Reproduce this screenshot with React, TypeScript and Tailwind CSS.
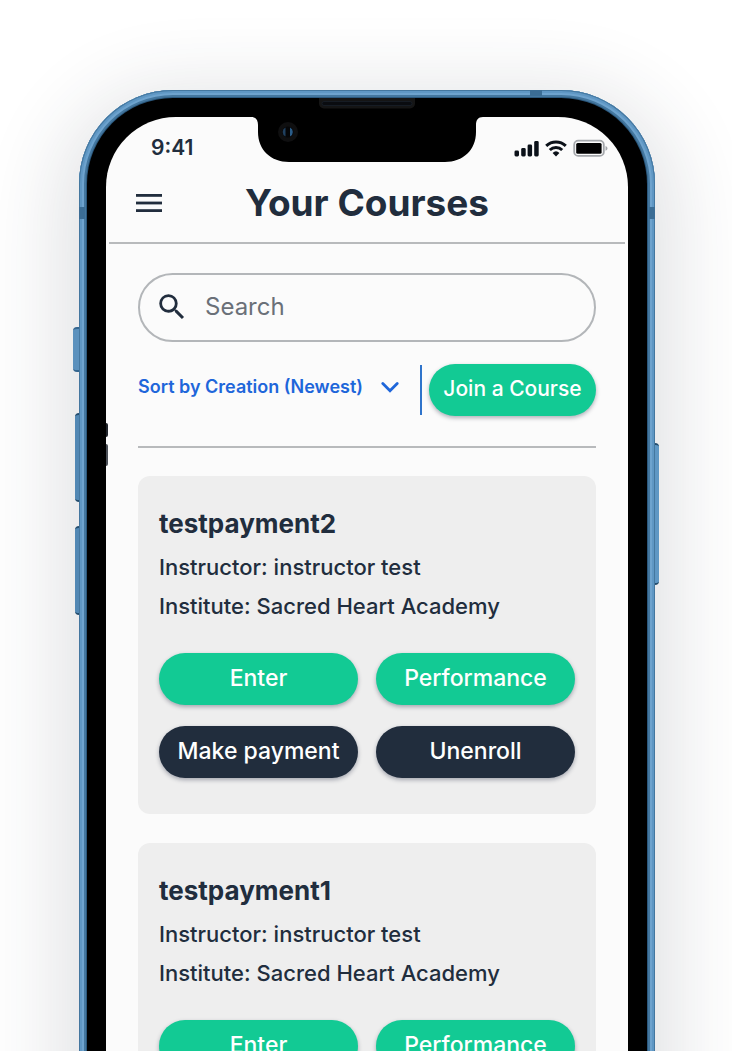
import { useState } from "react";
import { MdSearch } from "react-icons/md";

type Course = { name: string; instructor: string; institute: string };

const courses: Course[] = [
  { name: "testpayment2", instructor: "instructor test", institute: "Sacred Heart Academy" },
  { name: "testpayment1", instructor: "instructor test", institute: "Sacred Heart Academy" },
];

function Pill({ label, tone, compact = false }: { label: string; tone: "green" | "navy"; compact?: boolean }) {
  const color = tone === "green" ? "bg-[#12ca94]" : "bg-[#212d3d]";
  const size = compact ? "text-[21px]" : "text-[23px]";
  return (
    <button
      type="button"
      className={`h-13 w-full rounded-full pb-0.5 leading-7 font-medium whitespace-nowrap text-white shadow-[0_2px_4px_rgba(30,35,60,0.35)] ${size} ${color}`}
    >
      {label}
    </button>
  );
}

function CourseCard({ course }: { course: Course }) {
  return (
    <article className="rounded-xl bg-[#eeeeee] px-[21px] pt-7 pb-9">
      <h2 className="text-[26px] leading-10 font-bold">{course.name}</h2>
      <p className="mt-1 text-[22px] leading-[39px] font-medium">Instructor: {course.instructor}</p>
      <p className="text-[22px] leading-[39px] font-medium">Institute: {course.institute}</p>
      <div className="mt-[27px] grid grid-cols-2 gap-x-[18px] gap-y-[21px]">
        <Pill label="Enter" tone="green" />
        <Pill label="Performance" tone="green" />
        <Pill label="Make payment" tone="navy" />
        <Pill label="Unenroll" tone="navy" />
      </div>
    </article>
  );
}

function StatusIcons() {
  return (
    <svg width="94" height="20" viewBox="0 0 94 20" fill="#0b1119" aria-hidden="true">
      <rect x="0.5" y="12.500" width="4.5" height="6" rx="1.4" />
      <rect x="7.2" y="10" width="4.5" height="8.5" rx="1.4" />
      <rect x="13.6" y="6.500" width="4.5" height="12" rx="1.4" />
      <rect x="20.2" y="3" width="4.5" height="15.5" rx="1.4" />
      <g fill="none" stroke="#0b1119" strokeWidth="3">
        <path d="M32.2 7.900a14.4 14.4 0 0 1 19.6 0" />
        <path d="M35.8 12a9 9 0 0 1 12.4 0" />
      </g>
      <path d="M42 18.500l-3.4-3.6a5 5 0 0 1 6.8 0z" />
      <rect x="60.2" y="2.7" width="29.6" height="15.2" rx="4" fill="none" stroke="#a4a7ab" strokeWidth="1.8" />
      <rect x="62.2" y="4.900" width="25.400" height="10.8" rx="1.500" fill="#000" />
      <path d="M91.5 7.900c1.4.4 2 1.400 2 2.400s-.6 2-2 2.400z" fill="#a4a7ab" />
    </svg>
  );
}

function Notch() {
  return (
    <svg
      className="absolute top-0 left-1/2 -translate-x-1/2"
      width="232"
      height="65"
      viewBox="0 0 232 65"
      aria-hidden="true"
    >
      <path d="M0 19V0H232V19C227 19 225 22 225 27V34C225 52 212 64 194 64H38C20 64 7 52 7 34V27C7 22 5 19 0 19Z" fill="#000" />
      <path d="M68 0H164V5.500a5 5 0 0 1-5 5H73a5 5 0 0 1-5-5Z" fill="#151515" />
      <rect x="71" y="3.500" width="90" height="4" rx="2" fill="#0a0c10" stroke="#1b2530" strokeWidth="0.6" />
      <circle cx="37" cy="34" r="10" fill="#0f0f10" />
      <circle cx="37" cy="34" r="5.500" fill="#050608" />
      <path d="M34.5 29.5a5 5 0 0 0 0 9z" fill="#20405f" />
      <path d="M39 29.5a5 5 0 0 1 0 9z" fill="#2a5c88" />
    </svg>
  );
}

function SideKeys() {
  return (
    <div aria-hidden="true">
      <span className="absolute top-[237px] -left-1.5 h-[45px] w-1.5 rounded-l-sm border-y-2 border-[#35668f] bg-[#5b91bd]" />
      <span className="absolute top-[323px] -left-1 h-[89px] w-1 rounded-l-sm border-y-2 border-[#244d6e] bg-[#5288b4]" />
      <span className="absolute top-[436px] -left-1 h-[89px] w-1 rounded-l-sm border-y-2 border-[#244d6e] bg-[#5288b4]" />
      <span className="absolute top-[353px] -right-1 h-[142px] w-1 rounded-r-sm border-y-2 border-[#244d6e] bg-[#5f97c4]" />
      <span className="absolute top-[117px] left-0 h-3 w-1.5 bg-[#3b6d95]" />
      <span className="absolute top-[117px] right-0 h-3 w-1.5 bg-[#3b6d95]" />
      <span className="absolute top-0 right-[113px] h-1.5 w-3 bg-[#3b6d95]" />
    </div>
  );
}

export default function App() {
  const [sort, setSort] = useState("newest");

  return (
    <div className="h-screen overflow-hidden bg-white pt-[90px] pr-[77px] pl-[79px] font-['Inter','Liberation_Sans',sans-serif] text-[#212d3d]">
      <div className="relative rounded-t-[94px] bg-[#2b587d] px-2 pt-2 shadow-[inset_0_0_0_1px_#44779f,inset_0_0_0_3px_#5f97c4,inset_0_0_0_5px_#6ea3ce,inset_0_0_0_7px_#44779f,0_20px_80px_20px_rgba(40,48,66,0.14)]">
        <SideKeys />
        <div className="relative rounded-t-[86px] bg-black px-[19px] pt-[19px]">
          <div className="rounded-t-[70px] bg-[#fbfbfb]">
            <div className="flex h-[62px] items-center justify-between pr-5 pl-[45px]">
              <span className="text-[21px] leading-7 font-semibold">9:41</span>
              <StatusIcons />
            </div>

            <header className="mx-[3px] grid grid-cols-[1fr_auto_1fr] items-center border-b-2 border-[#b8babc] pr-[27px] pb-[15px] pl-[27px]">
              <button type="button" aria-label="Open menu" className="justify-self-start">
                <svg width="26" height="20" viewBox="0 0 26 20" fill="#212d3d" aria-hidden="true">
                  <rect y="1" width="26" height="2.8" />
                  <rect y="8.6" width="26" height="2.8" />
                  <rect y="16.2" width="26" height="2.8" />
                </svg>
              </button>
              <h1 className="text-[37px] leading-12 font-bold whitespace-nowrap">Your Courses</h1>
            </header>

            <main className="px-8 pt-[29px]">
              <label className="flex h-[69px] items-center rounded-full border-2 border-[#b3b6b9] pr-6 pb-0.5 pl-[15px]">
                <MdSearch className="size-[34px] shrink-0" aria-hidden="true" />
                <input
                  type="search"
                  placeholder="Search"
                  aria-label="Search courses"
                  className="ml-4 w-full min-w-0 bg-transparent text-2xl outline-none placeholder:text-[#6a7078]"
                />
              </label>

              <div className="mt-[22px] flex h-13 items-center">
                <div className="relative mb-1.5 min-w-0 flex-1">
                  <select
                    aria-label="Sort courses"
                    value={sort}
                    onChange={(e) => setSort(e.target.value)}
                    className="w-full appearance-none bg-transparent pr-10 text-lg leading-6 font-semibold text-[#1e66da] outline-none"
                  >
                    <option value="newest">Sort by Creation (Newest)</option>
                    <option value="oldest">Sort by Creation (Oldest)</option>
                  </select>
                  <svg
                    className="pointer-events-none absolute top-1/2 right-[21px] -translate-y-1/2"
                    width="18"
                    height="12"
                    viewBox="0 0 18 12"
                    fill="none"
                    stroke="#1e66da"
                    strokeWidth="2.8"
                    strokeLinecap="round"
                    aria-hidden="true"
                  >
                    <path d="M1.8 2.500L9 9.700l7.200-7.200" />
                  </svg>
                </div>
                <div className="mr-[7px] h-[50px] w-[2px] bg-[#2f74cb]" />
                <div className="w-[167px] shrink-0">
                  <Pill label="Join a Course" tone="green" compact />
                </div>
              </div>

              <hr className="mt-[30px] border-t-2 border-[#b8babc]" />

              <section aria-label="Courses" className="mt-7 grid gap-[29px]">
                {courses.map((course) => (
                  <CourseCard key={course.name} course={course} />
                ))}
              </section>
            </main>
          </div>
          <Notch />
          <span className="absolute top-[325px] left-[19px] h-3.5 w-0.5 rounded-r-sm bg-[#20242b]" />
          <span className="absolute top-[346px] left-[19px] h-[22px] w-0.5 rounded-r-sm bg-[#4b5058]" />
        </div>
      </div>
    </div>
  );
}
